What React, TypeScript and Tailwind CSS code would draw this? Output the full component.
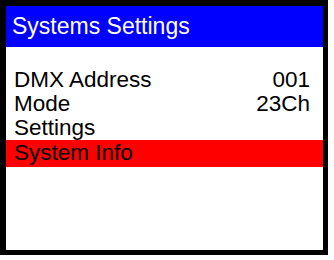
import React from 'react';

const ROWS = [
  { label: 'DMX Address', value: '001' },
  { label: 'Mode', value: '23Ch' },
  { label: 'Settings', value: '' },
];

const App: React.FC = () => {
  return (
    <div className="w-[334px] h-[260px] bg-white" style={{ fontFamily: '"Liberation Sans", Arial, sans-serif' }}>
      <div className="w-[328px] h-[255px] border-black border-t-[6px] border-l-[6px] border-r-[5px] border-b-[5px] bg-white flex flex-col">
        {/* title bar */}
        <div className="h-[41px] bg-[#0000ff] text-white text-[23px] leading-[41px] pl-[6px]">
          Systems Settings
        </div>
        <div className="pt-[21px] flex flex-col">
          {ROWS.map((row) => (
            <div key={row.label} className="h-[24px] leading-[24px] text-[22.5px] text-black flex justify-between pl-[8px] pr-[13px]">
              <span>{row.label}</span>
              <span>{row.value}</span>
            </div>
          ))}
          <div className="h-[27px] leading-[24px] pt-[1px] text-[22.5px] text-black bg-[#ff0000] pl-[8px]">
            System Info
          </div>
        </div>
      </div>
    </div>
  );
};

export default App;
